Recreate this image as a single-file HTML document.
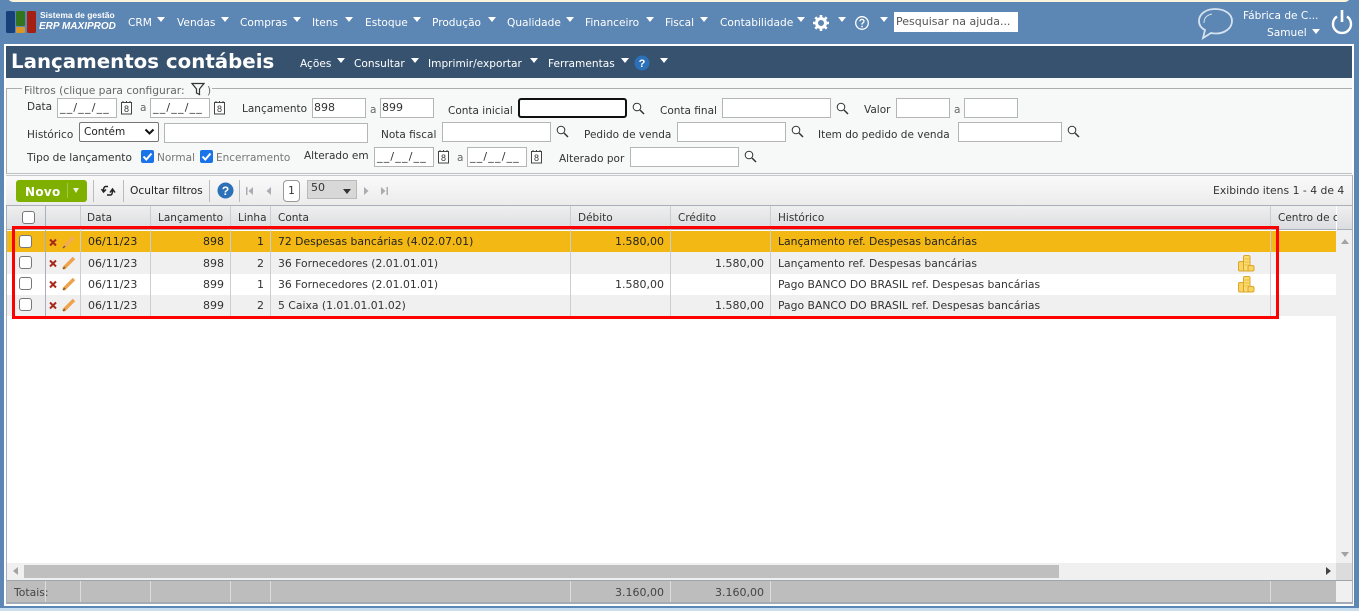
<!DOCTYPE html>
<html lang="pt-BR"><head><meta charset="utf-8"><title>Lançamentos contábeis</title>
<style>
html,body{margin:0;padding:0}
body{width:1359px;height:611px;position:relative;overflow:hidden;background:#5c86b3;font-family:"DejaVu Sans","Liberation Sans",sans-serif;font-size:10.5px;color:#333}
.a,.t,.n,.i,.c,.tri,.s,.ln{position:absolute}
.t{white-space:nowrap;line-height:14px}
.n{white-space:nowrap;color:#fff;line-height:14px;top:16px;font-size:10.6px}
.tri{width:0;height:0;border-left:4.5px solid transparent;border-right:4.5px solid transparent;border-top:5px solid #fff}
.i{box-sizing:border-box;height:20px;background:#fff;border:1px solid #b5b5b5;font-size:11px;line-height:18px;padding-left:1px;color:#333;white-space:nowrap;overflow:hidden}
.d{letter-spacing:1.2px;padding-left:2px}
.ln{background:#c9ced5;width:1px}
.s{width:13px;height:13px}
.c{width:13px;height:13px;box-sizing:border-box;border:1px solid #777;border-radius:3px;background:#fff;left:19px}
.r{text-align:right}
.g{font-size:10.8px}
.m{font-size:11px}
</style></head><body>
<div class="a" style="left:8px;top:-4px;width:1342px;height:6px;background:#fbf4dc;border-radius:0 0 5px 5px"></div>
<div class="a" style="left:0;top:608px;width:1359px;height:3px;background:#c9dff0"></div>

<!-- logo -->
<svg class="a" style="left:5px;top:10px" width="32" height="24"><rect x="1" y="1" width="9" height="22" rx="1.500" fill="#17407a"/><rect x="11" y="1" width="9" height="15" rx="1.500" fill="#33751c"/><rect x="11" y="17" width="9" height="6" rx="1" fill="#d9962a"/><rect x="22" y="1" width="9" height="22" rx="1.500" fill="#a52012"/></svg>
<div class="t" style="left:40px;top:8px;color:#fff;font-family:'Liberation Sans',sans-serif;font-size:8.500px;font-weight:bold">Sistema de gestão</div>
<div class="t" style="left:39px;top:20px;color:#fff;font-family:'Liberation Sans',sans-serif;font-size:10px;font-weight:bold;font-style:italic">ERP MAXIPROD</div>

<!-- menu -->
<div class="n" style="left:128px">CRM</div><div class="tri" style="left:157px;top:17px"></div>
<div class="n" style="left:177px">Vendas</div><div class="tri" style="left:221px;top:17px"></div>
<div class="n" style="left:240px">Compras</div><div class="tri" style="left:293px;top:17px"></div>
<div class="n" style="left:312px">Itens</div><div class="tri" style="left:345px;top:17px"></div>
<div class="n" style="left:365px">Estoque</div><div class="tri" style="left:413px;top:17px"></div>
<div class="n" style="left:432px">Produção</div><div class="tri" style="left:488px;top:17px"></div>
<div class="n" style="left:507px">Qualidade</div><div class="tri" style="left:566px;top:17px"></div>
<div class="n" style="left:585px">Financeiro</div><div class="tri" style="left:646px;top:17px"></div>
<div class="n" style="left:665px">Fiscal</div><div class="tri" style="left:700px;top:17px"></div>
<div class="n" style="left:720px">Contabilidade</div><div class="tri" style="left:797px;top:17px"></div>
<svg class="a" style="left:812px;top:14px" width="18" height="18" viewBox="0 0 18 18"><circle cx="9" cy="9" r="4.500" fill="none" stroke="#fff" stroke-width="3"/><path d="M9 1v3M9 14v3M1 9h3M14 9h3M3.300 3.300l2.200 2.200M12.500 12.500l2.200 2.200M3.300 14.700l2.200-2.200M12.500 5.500l2.200-2.200" stroke="#fff" stroke-width="2.600"/></svg>
<div class="tri" style="left:838px;top:17px"></div>
<svg class="a" style="left:854px;top:15px" width="16" height="16" viewBox="0 0 16 16"><circle cx="8" cy="8" r="6.300" fill="none" stroke="#fff" stroke-width="1.300"/><path d="M6 6.300C6 3.800 10 3.800 10 6.200C10 7.800 8 7.800 8 9.600" fill="none" stroke="#fff" stroke-width="1.300"/><rect x="7.300" y="10.800" width="1.500" height="1.500" fill="#fff"/></svg>
<div class="tri" style="left:880px;top:17px"></div>
<div class="a" style="left:894px;top:12px;width:124px;height:20px;background:#fff;color:#555;font-size:11px;line-height:20px;padding-left:2px;box-sizing:border-box;white-space:nowrap">Pesquisar na ajuda...</div>

<svg class="a" style="left:1196px;top:6px" width="40" height="34" viewBox="0 0 40 34"><path d="M19 3C10 3 3 8 3 15C3 19 5 22 9 24L7 32L15 27C17 27.500 19 27.500 20 27.500C29 27.500 36 22 36 15C36 8 29 3 19 3Z" fill="none" stroke="#d5e2ef" stroke-width="1.800"/><path d="M8 17C8 12 11 9 16 8" fill="none" stroke="#d5e2ef" stroke-width="1"/></svg>
<div class="n" style="left:1243px;top:9px">Fábrica de C...</div>
<div class="n" style="left:1267px;top:26px">Samuel</div><div class="tri" style="left:1312px;top:29px"></div>
<svg class="a" style="left:1329px;top:7px" width="26" height="28" viewBox="0 0 26 28"><path d="M8 9.500A9 9 0 1 0 18 9.500" fill="none" stroke="#fff" stroke-width="2.400"/><path d="M13 3V15" stroke="#fff" stroke-width="2.600"/></svg>

<!-- panel -->
<div class="a" style="left:4px;top:44px;width:1350px;height:562px;background:#fff"></div>
<div class="a" style="left:6px;top:46px;width:1346px;height:32px;background:#36526f"></div>
<div class="t" style="left:11px;top:49px;color:#fff;font-family:'DejaVu Sans',sans-serif;font-weight:bold;font-size:19.800px;line-height:25px">Lançamentos contábeis</div>
<div class="n" style="left:300px;top:57px">Ações</div><div class="tri" style="left:337px;top:58px"></div>
<div class="n" style="left:354px;top:57px">Consultar</div><div class="tri" style="left:411px;top:58px"></div>
<div class="n" style="left:428px;top:57px">Imprimir/exportar</div><div class="tri" style="left:530px;top:58px"></div>
<div class="n" style="left:548px;top:57px">Ferramentas</div><div class="tri" style="left:621px;top:58px"></div>
<svg class="a" style="left:634px;top:55px" width="16" height="16"><circle cx="8" cy="8" r="7.500" fill="#2c70b8"/><text x="8" y="12" text-anchor="middle" font-family="Liberation Sans" font-weight="bold" font-size="11" fill="#fff">?</text></svg>
<div class="tri" style="left:660px;top:58px"></div>

<!-- filters -->
<div class="a" style="left:6px;top:78px;width:1346px;height:97px;background:#f7f8f8"></div>
<div class="a" style="left:6px;top:88px;width:1346px;height:86px;box-sizing:border-box;border:1px solid #adadad;border-bottom:1px solid #c0c0c0;border-right:none"></div>
<div class="a" style="left:22px;top:83px;width:190px;height:12px;background:#f7f8f8"></div>
<div class="t" style="left:24px;top:84px;color:#666;font-size:10.700px">Filtros (clique para configurar:</div>
<svg class="a" style="left:191px;top:82px" width="14" height="14" viewBox="0 0 14 14"><path d="M1 1.500H13L8.500 7V12.500L5.500 11V7Z" fill="none" stroke="#333" stroke-width="1.200"/></svg>
<div class="t" style="left:207px;top:84px;color:#666">)</div>

<div class="t" style="left:27px;top:100px">Data</div>
<div class="i d" style="left:57px;top:98px;width:60px">__/__/__</div>
<svg class="a" style="left:120px;top:100px" width="13" height="15"><rect x="1.500" y="2.500" width="10" height="11.500" fill="#fff" stroke="#444"/><path d="M3 1v2M6.500 1v2M10 1v2" stroke="#444"/><text x="6.500" y="12" text-anchor="middle" font-size="9" fill="#333" font-family="Liberation Sans">8</text></svg>
<div class="t" style="left:140px;top:101px;color:#666">a</div>
<div class="i d" style="left:150px;top:98px;width:60px">__/__/__</div>
<svg class="a" style="left:213px;top:100px" width="13" height="15"><rect x="1.500" y="2.500" width="10" height="11.500" fill="#fff" stroke="#444"/><path d="M3 1v2M6.500 1v2M10 1v2" stroke="#444"/><text x="6.500" y="12" text-anchor="middle" font-size="9" fill="#333" font-family="Liberation Sans">8</text></svg>
<div class="t" style="left:242px;top:102px">Lançamento</div>
<div class="i" style="left:312px;top:98px;width:54px">898</div>
<div class="t" style="left:370px;top:103px;color:#666">a</div>
<div class="i" style="left:380px;top:98px;width:54px">899</div>
<div class="t" style="left:448px;top:104px">Conta inicial</div>
<div class="a" style="left:518px;top:98px;width:109px;height:20px;box-sizing:border-box;background:#fff;border:2px solid #111;border-radius:3px"></div>
<svg class="s" style="left:632px;top:102px" viewBox="0 0 13 13"><circle cx="5" cy="5" r="3.800" fill="#fff" stroke="#333"/><path d="M8 8l4 4" stroke="#333" stroke-width="1.500"/></svg>
<div class="t" style="left:660px;top:104px">Conta final</div>
<div class="i" style="left:722px;top:98px;width:109px"></div>
<svg class="s" style="left:836px;top:102px" viewBox="0 0 13 13"><circle cx="5" cy="5" r="3.800" fill="#fff" stroke="#333"/><path d="M8 8l4 4" stroke="#333" stroke-width="1.500"/></svg>
<div class="t" style="left:864px;top:103px">Valor</div>
<div class="i" style="left:896px;top:98px;width:54px"></div>
<div class="t" style="left:954px;top:103px;color:#666">a</div>
<div class="i" style="left:964px;top:98px;width:54px"></div>

<div class="t" style="left:27px;top:128px">Histórico</div>
<div class="a" style="left:79px;top:122px;width:80px;height:20px;box-sizing:border-box;background:#fff;border:1px solid #767676;border-radius:2px;font-size:10.500px;line-height:18px;padding-left:4px;color:#222">Contém</div>
<svg class="a" style="left:144px;top:128px" width="12" height="8"><path d="M1.500 1.500L5.500 5.500L9.500 1.500" fill="none" stroke="#111" stroke-width="2"/></svg>
<div class="i" style="left:164px;top:123px;width:204px"></div>
<div class="t" style="left:381px;top:128px">Nota fiscal</div>
<div class="i" style="left:442px;top:122px;width:109px"></div>
<svg class="s" style="left:556px;top:125px" viewBox="0 0 13 13"><circle cx="5" cy="5" r="3.800" fill="#fff" stroke="#333"/><path d="M8 8l4 4" stroke="#333" stroke-width="1.500"/></svg>
<div class="t" style="left:584px;top:128px">Pedido de venda</div>
<div class="i" style="left:677px;top:122px;width:109px"></div>
<svg class="s" style="left:791px;top:125px" viewBox="0 0 13 13"><circle cx="5" cy="5" r="3.800" fill="#fff" stroke="#333"/><path d="M8 8l4 4" stroke="#333" stroke-width="1.500"/></svg>
<div class="t" style="left:818px;top:128px">Item do pedido de venda</div>
<div class="i" style="left:958px;top:122px;width:104px"></div>
<svg class="s" style="left:1067px;top:125px" viewBox="0 0 13 13"><circle cx="5" cy="5" r="3.800" fill="#fff" stroke="#333"/><path d="M8 8l4 4" stroke="#333" stroke-width="1.500"/></svg>

<div class="t" style="left:27px;top:151px;font-size:10.600px">Tipo de lançamento</div>
<svg class="a" style="left:141px;top:150px" width="13" height="13"><rect width="13" height="13" rx="2" fill="#1a73e8"/><path d="M2.500 6.500L5.300 9.500L10.500 3.500" fill="none" stroke="#fff" stroke-width="2"/></svg>
<div class="t" style="left:157px;top:151px;color:#777">Normal</div>
<svg class="a" style="left:200px;top:150px" width="13" height="13"><rect width="13" height="13" rx="2" fill="#1a73e8"/><path d="M2.500 6.500L5.300 9.500L10.500 3.500" fill="none" stroke="#fff" stroke-width="2"/></svg>
<div class="t" style="left:216px;top:151px;color:#777">Encerramento</div>
<div class="t" style="left:304px;top:149px">Alterado em</div>
<div class="i d" style="left:374px;top:147px;width:60px">__/__/__</div>
<svg class="a" style="left:437px;top:149px" width="13" height="15"><rect x="1.500" y="2.500" width="10" height="11.500" fill="#fff" stroke="#444"/><path d="M3 1v2M6.500 1v2M10 1v2" stroke="#444"/><text x="6.500" y="12" text-anchor="middle" font-size="9" fill="#333" font-family="Liberation Sans">8</text></svg>
<div class="t" style="left:457px;top:151px;color:#666">a</div>
<div class="i d" style="left:467px;top:147px;width:60px">__/__/__</div>
<svg class="a" style="left:530px;top:149px" width="13" height="15"><rect x="1.500" y="2.500" width="10" height="11.500" fill="#fff" stroke="#444"/><path d="M3 1v2M6.500 1v2M10 1v2" stroke="#444"/><text x="6.500" y="12" text-anchor="middle" font-size="9" fill="#333" font-family="Liberation Sans">8</text></svg>
<div class="t" style="left:559px;top:152px">Alterado por</div>
<div class="i" style="left:630px;top:147px;width:109px"></div>
<svg class="s" style="left:744px;top:150px" viewBox="0 0 13 13"><circle cx="5" cy="5" r="3.800" fill="#fff" stroke="#333"/><path d="M8 8l4 4" stroke="#333" stroke-width="1.500"/></svg>

<!-- toolbar -->
<div class="a" style="left:6px;top:175px;width:1346px;height:31px;box-sizing:border-box;background:linear-gradient(#fafafa,#ececec);border-bottom:1px solid #a9b0b9"></div>
<div class="a" style="left:6px;top:175px;width:1346px;height:1px;background:#c5c9ce"></div>
<div class="a" style="left:16px;top:180px;width:71px;height:22px;background:#7fb000;border-radius:3px"></div>
<div class="t" style="left:25px;top:185px;color:#fff;font-weight:bold;font-size:12px;letter-spacing:.3px">Novo</div>
<div class="a" style="left:67px;top:183px;width:1px;height:15px;background:#a3c94a"></div>
<div class="tri" style="left:73px;top:188px;border-left-width:3.500px;border-right-width:3.500px;border-top-color:#f2f2d8"></div>
<div class="ln" style="left:93px;top:180px;height:22px;background:#bbb"></div>
<svg class="a" style="left:101px;top:184px" width="15" height="14" viewBox="0 0 15 14"><path d="M7 2.500H4.500C3 2.500 2.500 4 2.500 7M0.500 5L2.500 8L5 5.500" fill="none" stroke="#222" stroke-width="1.500"/><path d="M6 11H9.500C11 11 11.500 9.500 11.500 6M9 8.500L11.500 5L14 8.500" fill="none" stroke="#222" stroke-width="1.500"/></svg>
<div class="ln" style="left:123px;top:180px;height:22px;background:#bbb"></div>
<div class="t" style="left:130px;top:184px;color:#222;font-size:10.700px">Ocultar filtros</div>
<div class="ln" style="left:209px;top:180px;height:22px;background:#bbb"></div>
<svg class="a" style="left:217px;top:182px" width="17" height="17"><circle cx="8.500" cy="8.500" r="8" fill="#2c70b8"/><text x="8.500" y="13" text-anchor="middle" font-family="Liberation Sans" font-weight="bold" font-size="12" fill="#fff">?</text></svg>
<div class="ln" style="left:239px;top:180px;height:22px;background:#bbb"></div>
<svg class="a" style="left:244px;top:185px" width="30" height="12" fill="#a9adb2"><rect x="2" y="2" width="1.500" height="8"/><path d="M9 2V10L4.500 6Z"/><path d="M27 2V10L22.500 6Z"/></svg>
<div class="a" style="left:283px;top:180px;width:17px;height:22px;box-sizing:border-box;background:#fff;border:1px solid #999;border-radius:4px;text-align:center;line-height:21px;font-size:10.500px">1</div>
<div class="a" style="left:307px;top:180px;width:50px;height:19px;box-sizing:border-box;background:#d8d8d8;border:1px solid #b9b9b9;line-height:14px;padding-left:3px;color:#333;font-size:11px">50</div>
<div class="tri" style="left:343px;top:189px;border-top-color:#333"></div>
<svg class="a" style="left:361px;top:185px" width="30" height="12" fill="#a9adb2"><path d="M3 2V10L7.500 6Z"/><path d="M20 2V10L24.500 6Z"/><rect x="25.500" y="2" width="1.500" height="8"/></svg>
<div class="t g" style="left:1213px;top:184px;color:#333">Exibindo itens 1 - 4 de 4</div>

<!-- grid header -->
<div class="a" style="left:6px;top:206px;width:1330px;height:24px;box-sizing:border-box;background:linear-gradient(#efefef,#dcdde1);border-bottom:1px solid #a9b0b9"></div>
<div class="a" style="left:1337px;top:206px;width:16px;height:24px;box-sizing:border-box;background:linear-gradient(#efefef,#dcdde1);border-bottom:1px solid #a9b0b9"></div>
<div class="c" style="left:22px;top:211px;width:13px;height:13px"></div>
<div class="t" style="left:87px;top:211px">Data</div>
<div class="t" style="left:158px;top:211px">Lançamento</div>
<div class="t" style="left:238px;top:211px">Linha</div>
<div class="t" style="left:278px;top:211px">Conta</div>
<div class="t" style="left:578px;top:211px">Débito</div>
<div class="t" style="left:678px;top:211px">Crédito</div>
<div class="t" style="left:778px;top:211px">Histórico</div>
<div class="a" style="left:1271px;top:206px;width:66px;height:23px;overflow:hidden"><div class="t" style="left:7px;top:5px">Centro de custo</div></div>

<!-- rows -->
<div class="a" style="left:7px;top:231px;width:1329px;height:21px;background:#f4b815"></div>
<div class="a" style="left:7px;top:252px;width:1329px;height:22px;background:#f0f0f0"></div>
<div class="a" style="left:7px;top:274px;width:1329px;height:21px;background:#fff"></div>
<div class="a" style="left:7px;top:295px;width:1329px;height:21px;background:#f0f0f0"></div>

<div class="a" style="left:45px;top:206px;width:1px;height:110px;background:#a9b0b9"></div>
<div class="ln" style="left:80px;top:206px;height:110px"></div>
<div class="ln" style="left:150px;top:206px;height:110px"></div>
<div class="ln" style="left:230px;top:206px;height:110px"></div>
<div class="ln" style="left:270px;top:206px;height:110px"></div>
<div class="ln" style="left:570px;top:206px;height:110px"></div>
<div class="ln" style="left:670px;top:206px;height:110px"></div>
<div class="ln" style="left:770px;top:206px;height:110px"></div>
<div class="ln" style="left:1270px;top:206px;height:110px"></div>

<div class="c" style="top:235px"></div><div class="c" style="top:256px"></div><div class="c" style="top:277px"></div><div class="c" style="top:298px"></div>

<svg class="a" style="left:48px;top:234px" width="30" height="78" viewBox="0 0 30 78">
<g><path d="M2 5.500L8 11.500M8 5.500L2 11.500" stroke="#a82a1c" stroke-width="2"/><path d="M15.500 13.500L26 3" stroke="#f2ab52" stroke-width="3.400"/><path d="M15 14L17 12" stroke="#7d5a30" stroke-width="1.500"/></g>
<g transform="translate(0,21)"><path d="M2 5.500L8 11.500M8 5.500L2 11.500" stroke="#a82a1c" stroke-width="2"/><path d="M15.500 13.500L26 3" stroke="#eda24b" stroke-width="3.400"/><path d="M15 14L17 12" stroke="#7d5a30" stroke-width="1.500"/></g>
<g transform="translate(0,42)"><path d="M2 5.500L8 11.500M8 5.500L2 11.500" stroke="#a82a1c" stroke-width="2"/><path d="M15.500 13.500L26 3" stroke="#eda24b" stroke-width="3.400"/><path d="M15 14L17 12" stroke="#7d5a30" stroke-width="1.500"/></g>
<g transform="translate(0,63)"><path d="M2 5.500L8 11.500M8 5.500L2 11.500" stroke="#a82a1c" stroke-width="2"/><path d="M15.500 13.500L26 3" stroke="#eda24b" stroke-width="3.400"/><path d="M15 14L17 12" stroke="#7d5a30" stroke-width="1.500"/></g>
</svg>

<!-- row 1 -->
<div class="t m" style="left:88px;top:235px;color:#222">06/11/23</div>
<div class="t r m" style="left:151px;width:73px;top:235px;color:#222">898</div>
<div class="t r m" style="left:231px;width:33px;top:235px;color:#222">1</div>
<div class="t g" style="left:278px;top:235px;color:#222">72 Despesas bancárias (4.02.07.01)</div>
<div class="t r m" style="left:571px;width:93px;top:235px;color:#222">1.580,00</div>
<div class="t g" style="left:778px;top:235px;color:#222">Lançamento ref. Despesas bancárias</div>
<!-- row 2 -->
<div class="t m" style="left:88px;top:257px">06/11/23</div>
<div class="t r m" style="left:151px;width:73px;top:257px">898</div>
<div class="t r m" style="left:231px;width:33px;top:257px">2</div>
<div class="t g" style="left:278px;top:257px">36 Fornecedores (2.01.01.01)</div>
<div class="t r m" style="left:671px;width:93px;top:257px">1.580,00</div>
<div class="t g" style="left:778px;top:257px">Lançamento ref. Despesas bancárias</div>
<!-- row 3 -->
<div class="t m" style="left:88px;top:278px">06/11/23</div>
<div class="t r m" style="left:151px;width:73px;top:278px">899</div>
<div class="t r m" style="left:231px;width:33px;top:278px">1</div>
<div class="t g" style="left:278px;top:278px">36 Fornecedores (2.01.01.01)</div>
<div class="t r m" style="left:571px;width:93px;top:278px">1.580,00</div>
<div class="t g" style="left:778px;top:278px">Pago BANCO DO BRASIL ref. Despesas bancárias</div>
<!-- row 4 -->
<div class="t m" style="left:88px;top:299px">06/11/23</div>
<div class="t r m" style="left:151px;width:73px;top:299px">899</div>
<div class="t r m" style="left:231px;width:33px;top:299px">2</div>
<div class="t g" style="left:278px;top:299px">5 Caixa (1.01.01.01.02)</div>
<div class="t r m" style="left:671px;width:93px;top:299px">1.580,00</div>
<div class="t g" style="left:778px;top:299px">Pago BANCO DO BRASIL ref. Despesas bancárias</div>

<svg class="a" style="left:1237px;top:254px" width="18" height="18"><rect x="1.500" y="7.500" width="6" height="9.500" rx="1.500" fill="#f8d562" stroke="#dca52a"/><rect x="6.500" y="1.500" width="6.500" height="15.500" rx="1.500" fill="#fbdc6e" stroke="#dca52a"/><rect x="11" y="11.500" width="6" height="5.500" rx="1.500" fill="#f8d562" stroke="#dca52a"/><path d="M7.500 5h4.500M7.500 8h4.500M7.500 11h4.500" stroke="#eebc3c"/></svg>
<svg class="a" style="left:1237px;top:275px" width="18" height="18"><rect x="1.500" y="7.500" width="6" height="9.500" rx="1.500" fill="#f8d562" stroke="#dca52a"/><rect x="6.500" y="1.500" width="6.500" height="15.500" rx="1.500" fill="#fbdc6e" stroke="#dca52a"/><rect x="11" y="11.500" width="6" height="5.500" rx="1.500" fill="#f8d562" stroke="#dca52a"/><path d="M7.500 5h4.500M7.500 8h4.500M7.500 11h4.500" stroke="#eebc3c"/></svg>

<!-- scrollbars -->
<div class="a" style="left:1336px;top:230px;width:17px;height:333px;background:#f0f0f0"></div>
<div class="tri" style="left:1341px;top:239px;border-top:none;border-bottom:5px solid #a3a3a3"></div>
<div class="tri" style="left:1341px;top:552px;border-top-color:#a3a3a3"></div>
<div class="a" style="left:7px;top:563px;width:1329px;height:17px;background:#f0f0f0"></div>
<div class="a" style="left:24px;top:565px;width:1035px;height:13px;background:#bfbfbf"></div>
<div class="a" style="left:1336px;top:563px;width:17px;height:17px;background:#dcdcdc"></div>
<div class="a" style="left:13px;top:567px;width:0;height:0;border-top:4px solid transparent;border-bottom:4px solid transparent;border-right:5px solid #a3a3a3"></div>
<div class="a" style="left:1326px;top:567px;width:0;height:0;border-top:4px solid transparent;border-bottom:4px solid transparent;border-left:5px solid #444"></div>

<!-- totals -->
<div class="a" style="left:7px;top:580px;width:1329px;height:24px;box-sizing:border-box;background:#bdbdbd;border-bottom:2px solid #a4abb4"></div>
<div class="a" style="left:1336px;top:580px;width:17px;height:22px;background:#f0f0f0"></div>
<div class="a" style="left:1336px;top:602px;width:17px;height:2px;background:#a4abb4"></div>
<div class="a" style="left:6px;top:206px;width:1px;height:398px;background:#a9b0b9"></div>
<div class="a" style="left:1352px;top:175px;width:1px;height:429px;background:#a9b0b9"></div>
<div class="a" style="left:7px;top:580px;width:1346px;height:1px;background:#9ea5ae"></div>
<div class="a" style="left:45px;top:581px;width:1px;height:21px;background:#dcdcdc"></div>
<div class="a" style="left:80px;top:581px;width:1px;height:21px;background:#dcdcdc"></div>
<div class="a" style="left:150px;top:581px;width:1px;height:21px;background:#dcdcdc"></div>
<div class="a" style="left:230px;top:581px;width:1px;height:21px;background:#dcdcdc"></div>
<div class="a" style="left:270px;top:581px;width:1px;height:21px;background:#dcdcdc"></div>
<div class="a" style="left:570px;top:581px;width:1px;height:21px;background:#dcdcdc"></div>
<div class="a" style="left:670px;top:581px;width:1px;height:21px;background:#dcdcdc"></div>
<div class="a" style="left:770px;top:581px;width:1px;height:21px;background:#dcdcdc"></div>
<div class="a" style="left:1270px;top:581px;width:1px;height:21px;background:#dcdcdc"></div>
<div class="t g" style="left:14px;top:586px;color:#444">Totais:</div>
<div class="t r m" style="left:571px;width:93px;top:586px;color:#444">3.160,00</div>
<div class="t r m" style="left:671px;width:93px;top:586px;color:#444">3.160,00</div>

<!-- red highlight -->
<div class="a" style="left:12px;top:226px;width:1267px;height:93px;box-sizing:border-box;border:3px solid #fd0000"></div>
</body></html>
